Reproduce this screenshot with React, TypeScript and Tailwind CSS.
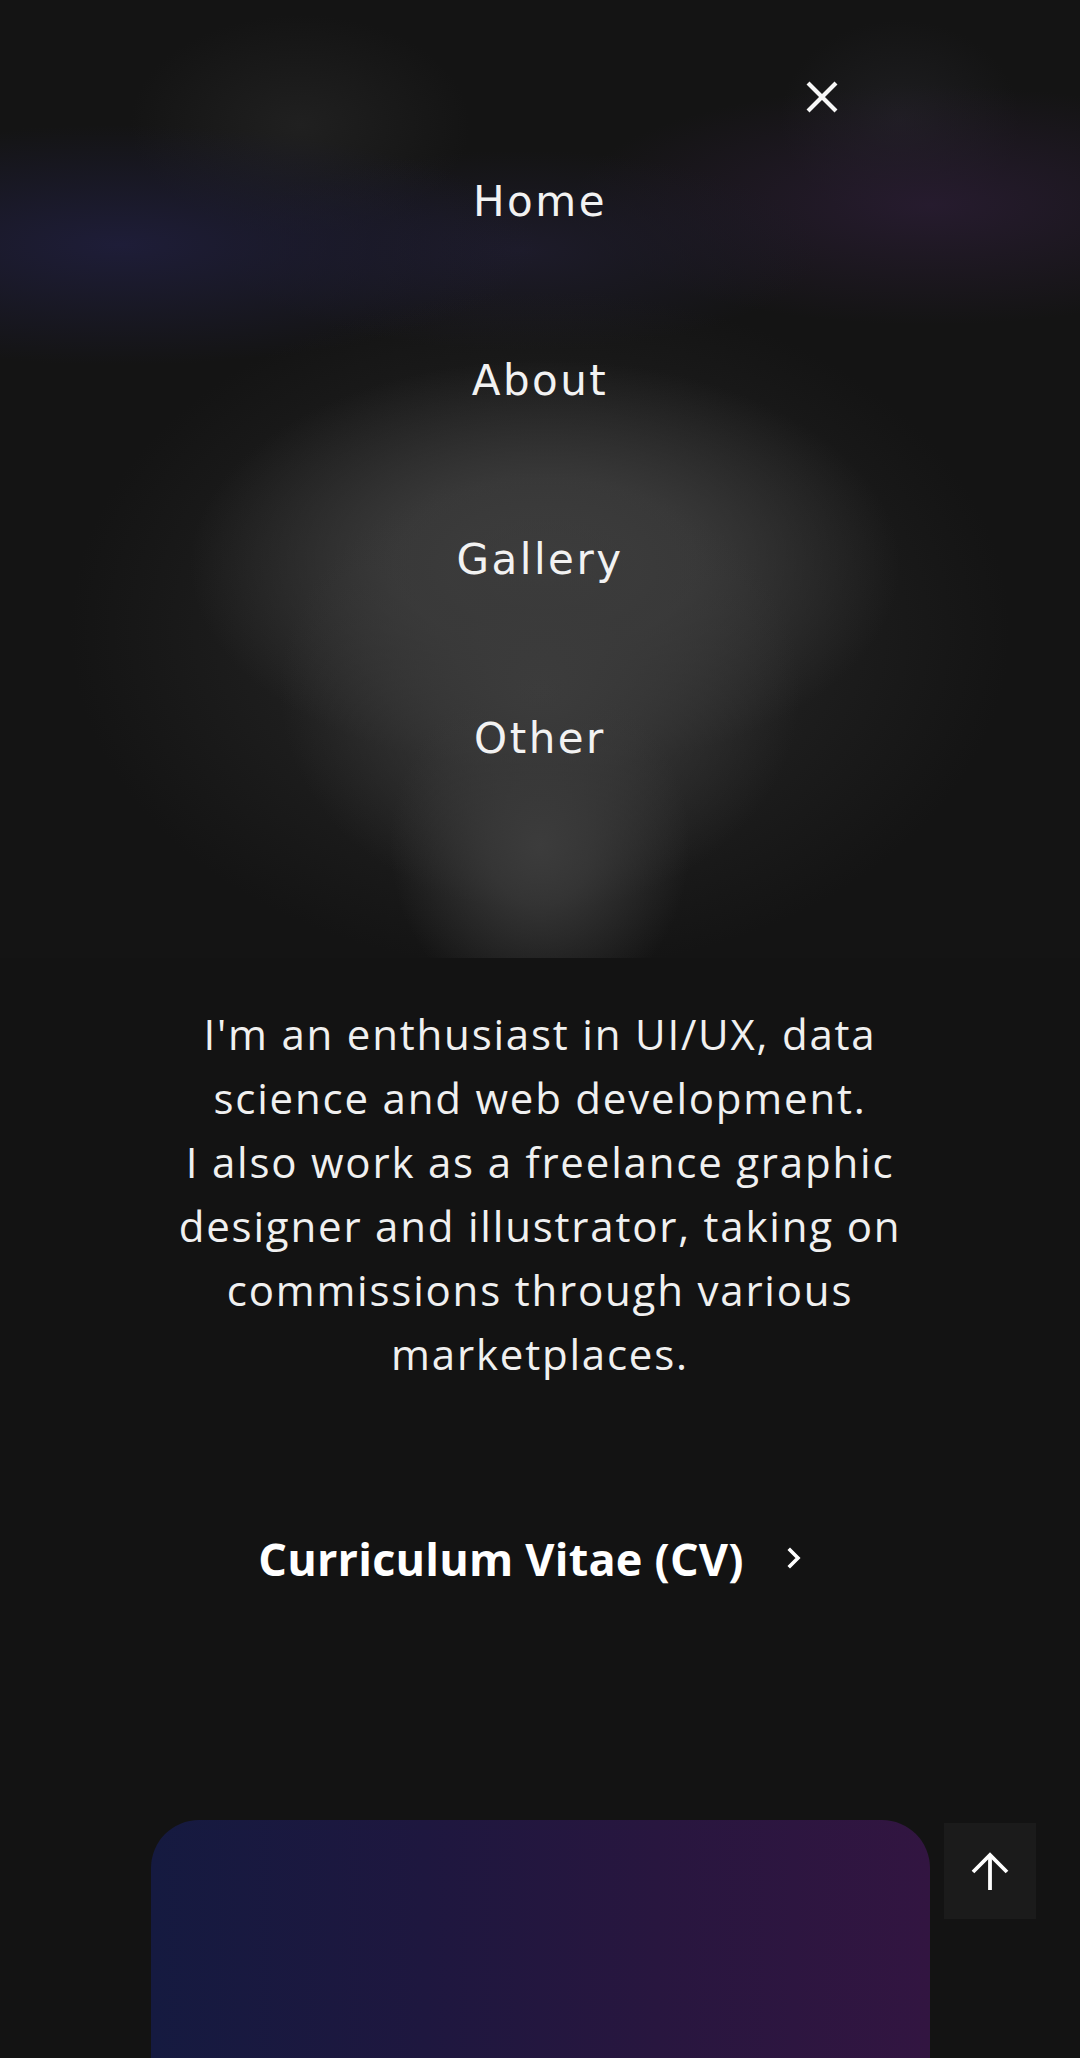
import React from "react";

function CloseIcon() {
  return (
    <svg width="32" height="32" viewBox="0 0 32 32" fill="none">
      <path d="M3.5 3.5 L28.5 28.5 M28.5 3.5 L3.5 28.5" stroke="#f7f7f7" strokeWidth="4.2" strokeLinecap="square" />
    </svg>
  );
}

function Chevron() {
  return (
    <svg width="16" height="22" viewBox="0 0 16 22" fill="none">
      <path d="M4 3 L12 11 L4 19" stroke="#ffffff" strokeWidth="3.6" strokeLinecap="square" strokeLinejoin="miter" />
    </svg>
  );
}

function ArrowUp() {
  return (
    <svg width="40" height="42" viewBox="0 0 40 42" fill="none">
      <path d="M20 5 L20 40" stroke="#ffffff" strokeWidth="3.8" />
      <path d="M3 22 L20 5 L37 22" stroke="#ffffff" strokeWidth="3.8" strokeLinejoin="miter" />
    </svg>
  );
}

const headerBg =
  "bg-[radial-gradient(ellipse_150px_170px_at_540px_845px,rgba(60,60,60,1)_0%,rgba(58,58,58,0.8)_35%,rgba(58,58,58,0)_100%),radial-gradient(ellipse_260px_220px_at_540px_690px,rgba(60,60,60,1)_0%,rgba(58,58,58,0.75)_40%,rgba(58,58,58,0)_100%),radial-gradient(ellipse_355px_205px_at_545px_565px,rgba(62,62,62,1)_0%,rgba(59,59,59,0.9)_42%,rgba(56,56,56,0)_100%),radial-gradient(ellipse_470px_340px_at_540px_630px,rgba(38,38,38,1)_0%,rgba(36,36,36,0.7)_50%,rgba(36,36,36,0)_100%),radial-gradient(ellipse_420px_120px_at_120px_245px,rgba(30,29,56,1)_0%,rgba(30,29,56,0)_100%),radial-gradient(ellipse_300px_100px_at_520px_250px,rgba(29,27,42,1)_0%,rgba(29,27,42,0)_100%),radial-gradient(ellipse_360px_120px_at_930px_205px,rgba(38,27,46,1)_0%,rgba(38,27,46,0)_100%),radial-gradient(ellipse_170px_110px_at_300px_125px,rgba(32,32,32,1)_0%,rgba(32,32,32,0)_100%),radial-gradient(ellipse_120px_100px_at_900px_120px,rgba(30,30,33,1)_0%,rgba(30,30,33,0)_100%)]";

export default function App() {
  const nav = ["Home", "About", "Gallery", "Other"];
  return (
    <div className="min-h-[2058px] w-full bg-[#131313] text-white overflow-hidden">
      <header className={`h-[958px] overflow-hidden bg-[#141414] ${headerBg}`}>
        <div className="pt-[81px] h-[112px] flex justify-end pr-[242px]">
          <button aria-label="Close menu" className="w-[32px] h-[32px] flex items-center justify-center">
            <CloseIcon />
          </button>
        </div>
        <nav className="flex flex-col items-center">
          {nav.map((n) => (
            <a
              key={n}
              href="#"
              className="h-[179px] flex items-center justify-center text-[42px] leading-none tracking-[2.5px] text-[#f2f2f2] [font-family:'DejaVu_Sans',sans-serif]"
            >
              {n}
            </a>
          ))}
        </nav>
      </header>

      <main className="flex flex-col items-center">
        <p className="pt-[44px] text-center text-[42px] leading-[64px] tracking-[1.8px] text-[#f0f0f0] whitespace-nowrap [font-family:'Open_Sans',sans-serif]">
          I'm an enthusiast in UI/UX, data
          <br />
          science and web development.
          <br />
          I also work as a freelance graphic
          <br />
          designer and illustrator, taking on
          <br />
          commissions through various
          <br />
          marketplaces.
        </p>

        <a href="#" className="mt-[142px] flex items-center gap-[42px] h-[60px] pr-[20px]">
          <span className="text-[45px] font-bold leading-none tracking-[0.2px] text-white [font-family:'Open_Sans',sans-serif]">
            Curriculum Vitae (CV)
          </span>
          <Chevron />
        </a>

        <section className="mt-[232px] w-[779px] h-[400px] rounded-t-[48px] bg-[linear-gradient(90deg,#151a40_0%,#1e173f_35%,#28163f_65%,#321541_100%)]" />
      </main>

      <button
        aria-label="Scroll to top"
        className="fixed right-[44px] bottom-[139px] w-[92px] h-[96px] bg-[#1b1b1b] flex items-center justify-center"
      >
        <ArrowUp />
      </button>
    </div>
  );
}
